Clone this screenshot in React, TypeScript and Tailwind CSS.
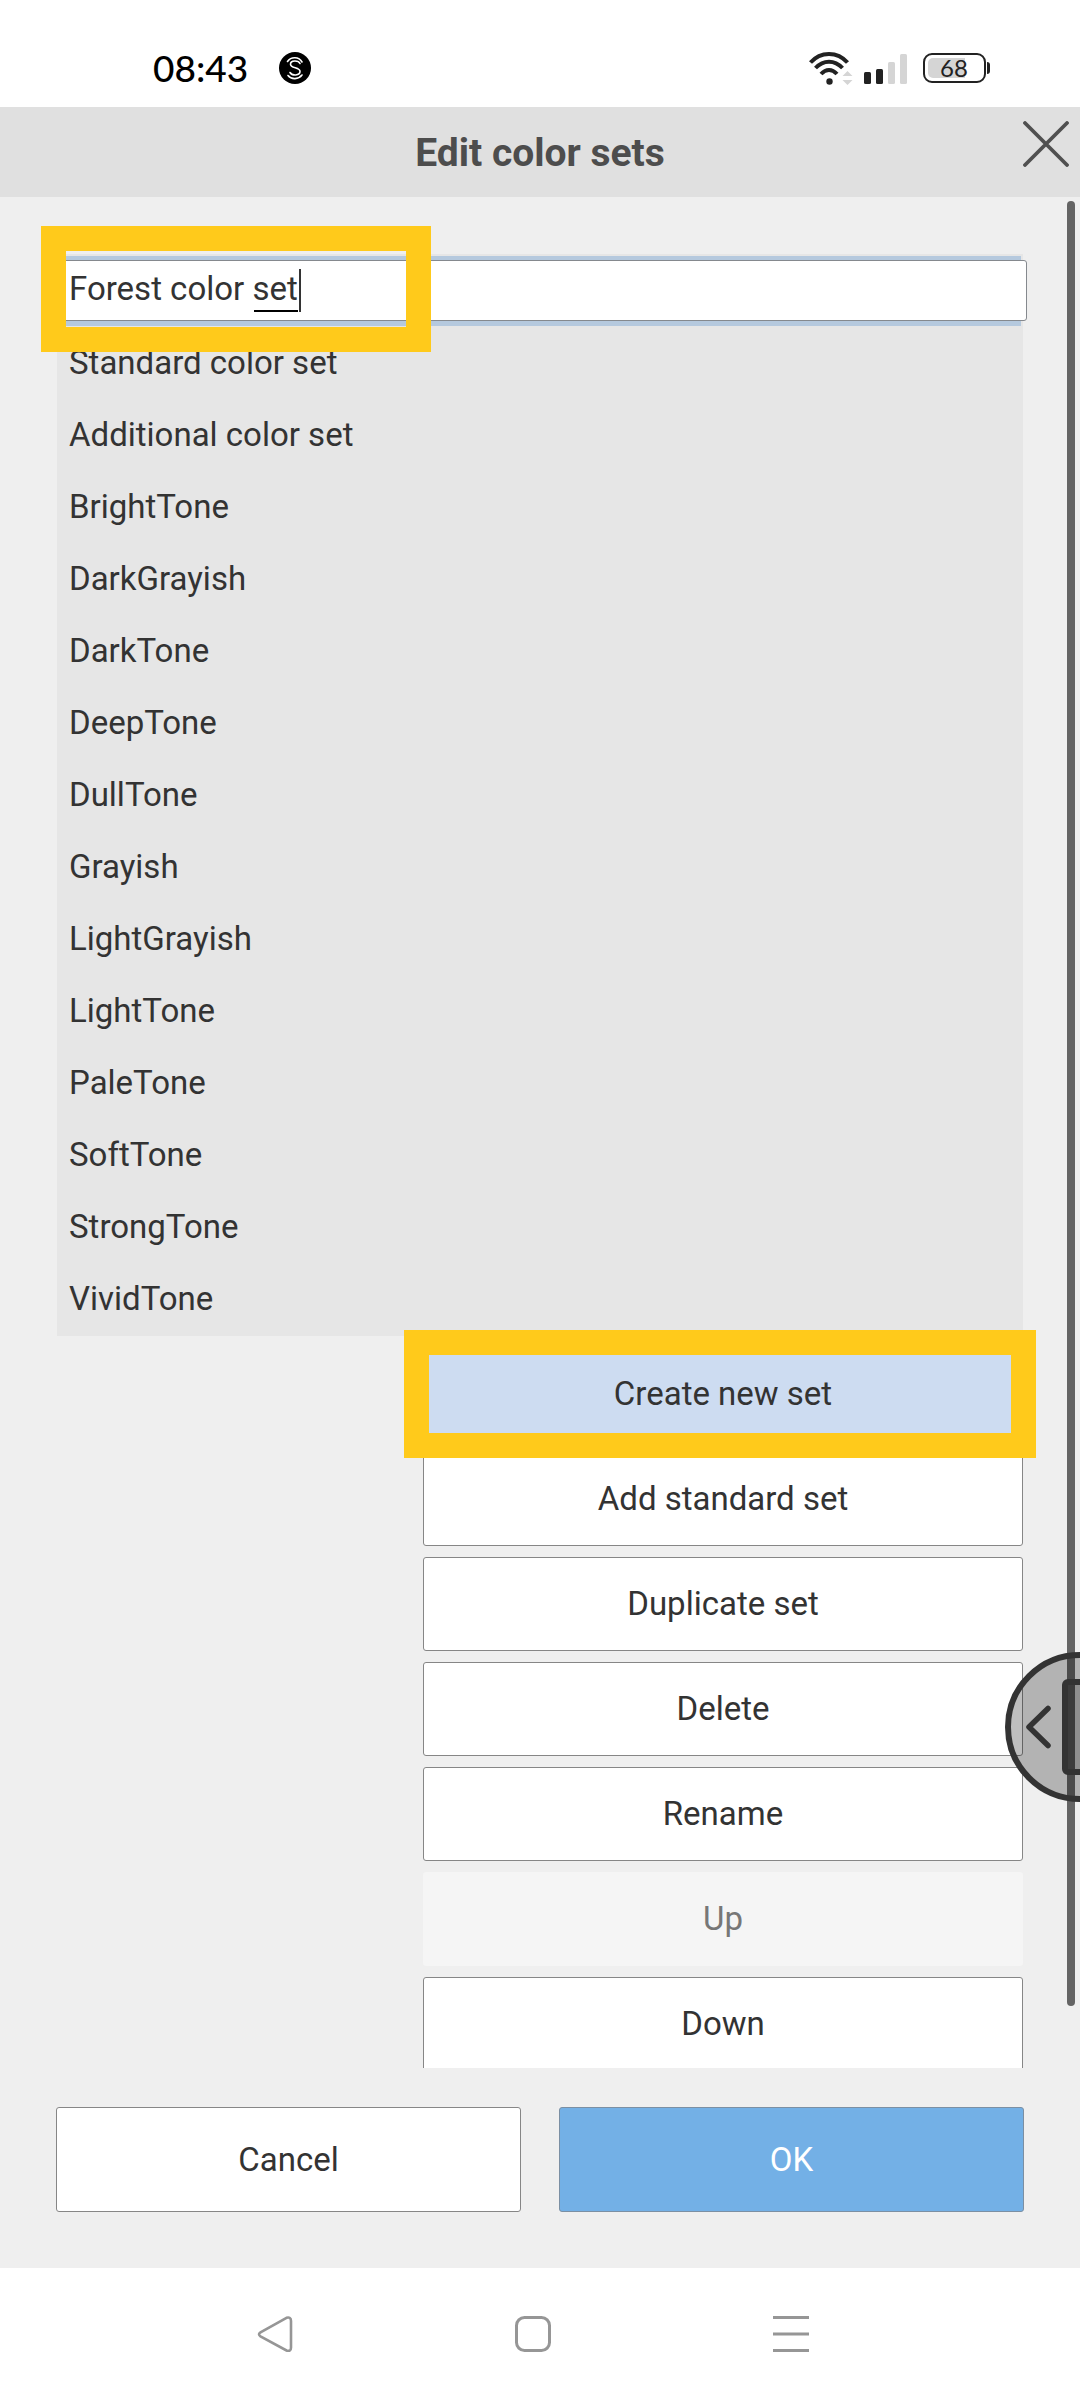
import { useState } from 'react'
import clsx from 'clsx'

const COLOR_SETS = [
   'Standard color set',
   'Additional color set',
   'BrightTone',
   'DarkGrayish',
   'DarkTone',
   'DeepTone',
   'DullTone',
   'Grayish',
   'LightGrayish',
   'LightTone',
   'PaleTone',
   'SoftTone',
   'StrongTone',
   'VividTone',
]

interface Action {
   label: string
   active?: boolean
   disabled?: boolean
}

const ACTIONS: Action[] = [
   { label: 'Create new set', active: true },
   { label: 'Add standard set' },
   { label: 'Duplicate set' },
   { label: 'Delete' },
   { label: 'Rename' },
   { label: 'Up', disabled: true },
   { label: 'Down' },
]

function StatusBar() {
   return (
      <div className="flex h-[107px] shrink-0 items-center justify-between bg-white pt-[29px] pr-[90px] pl-[153px] font-[Lato,sans-serif] text-black">
         <div className="flex items-center gap-[31px]">
            <span className="text-[37px] leading-[40px] font-medium">08:43</span>
            <svg width="32" height="32" viewBox="0 0 32 32" fill="none" aria-hidden="true">
               <circle cx="16" cy="16" r="16" fill="#000" />
               <g stroke="#fff" strokeWidth="1.6" strokeLinecap="round">
                  <path d="M8.5 9.5c3.5-5 11.5-5 14.5.5" />
                  <path d="M21 11.5c-1.500-3.500-9.500-3.500-9.500.7 0 4.500 9.500 2.800 9.500 7.300 0 4.300-8 4.500-10 1" />
                  <path d="M9 23.500c3.500 4.500 10.500 4 14-.5" />
               </g>
            </svg>
         </div>
         <div className="flex items-center">
            <svg width="98" height="34" viewBox="0 0 98 34" fill="none" aria-hidden="true">
               <g stroke="#222" strokeWidth="4">
                  <path d="M1.500 11.500c10-11.500 27-11.500 37 0" />
                  <path d="M6.500 17c8-8.500 19-8.500 27 0" />
                  <path d="M12 23c5-5.500 11-5.500 16 0" />
               </g>
               <circle cx="20.500" cy="30.500" r="3.200" fill="#222" />
               <path d="M38.500 20l5 5h-10zM38.500 34l5-5h-10z" fill="#d5d5d5" />
               <rect x="55" y="21" width="7" height="12" rx="1.500" fill="#222" />
               <rect x="67" y="18" width="7" height="15" rx="1.500" fill="#222" />
               <rect x="79" y="11" width="7" height="22" rx="1.500" fill="#d5d5d5" />
               <rect x="91" y="3" width="7" height="30" rx="1.500" fill="#d5d5d5" />
            </svg>
            <div className="ml-4 flex h-[30px] w-[63px] rounded-[9px] border-2 border-[#222] p-[3px]">
               <div className="relative w-[37px] rounded-l-[5px] bg-[#d5d5d5]">
                  <span className="absolute top-0 left-[12px] text-[24px] leading-[20px] text-[#222]">68</span>
               </div>
            </div>
            <div className="ml-px h-3 w-[3px] rounded-r-sm bg-[#222]" />
         </div>
      </div>
   )
}

function Header() {
   return (
      <header className="flex h-[90px] shrink-0 items-center bg-[#e0e0e0]">
         <div className="w-20" />
         <h1 className="flex-1 pt-[2px] text-center text-[39px] leading-[48px] font-bold text-[#4d4d4d]">Edit color sets</h1>
         <button type="button" aria-label="Close" className="flex h-full w-20 items-start justify-end pt-[14px] pr-[11px]">
            <svg width="46" height="46" viewBox="0 0 46 46" stroke="#505050" strokeWidth="3.800" strokeLinecap="round" aria-hidden="true">
               <path d="M2 2l42 42M44 2L2 44" />
            </svg>
         </button>
      </header>
   )
}

function NameField() {
   const [name, setName] = useState('Forest color set')

   return (
      <div className="relative mx-[2px] mb-[2px] h-[70px] bg-[#b5c9de] pt-[4px]">
         <input
            type="text"
            aria-label="Color set name"
            value={name}
            onChange={(e) => setName(e.target.value)}
            className="block h-[61px] w-[calc(100%+6px)] rounded-[3px] border border-[#85898e] bg-white pb-[4px] pl-[9px] outline-none"
         />
         {/* composing underline and text cursor */}
         <div className="absolute top-[54px] left-[195px] h-[2px] w-[44px] bg-black" />
         <div className="absolute top-[13px] left-[240px] h-[43px] w-[2px] bg-[#333]" />
         <div className="pointer-events-none absolute -top-[30px] -left-[18px] h-[126px] w-[390px] border-[25px] border-[#ffca1b]" />
      </div>
   )
}

function ActionButton({ label, active, disabled }: Action) {
   return (
      <div className="relative">
         <button
            type="button"
            disabled={disabled}
            className={clsx(
               'block h-[94px] w-full rounded-[3px] border',
               active && 'border-[#868686] bg-[#cddcf1]',
               disabled && 'border-transparent bg-[#f5f5f5] text-[#777]',
               !active && !disabled && 'border-[#868686] bg-white',
            )}
         >
            {label}
         </button>
         {active && (
            <div className="pointer-events-none absolute -top-[17px] -right-[13px] -bottom-[17px] -left-[19px] z-10 border-[25px] border-[#ffca1b]" />
         )}
      </div>
   )
}

function SideHandle() {
   return (
      <button type="button" aria-label="Open side panel" className="absolute top-[1652px] right-0 z-20">
         <svg width="75" height="150" viewBox="0 0 75 150" fill="none" stroke="#333" aria-hidden="true">
            <circle cx="75" cy="75" r="72" fill="#000" fillOpacity="0.25" strokeWidth="6" />
            <rect x="60" y="30" width="50" height="90" rx="3" fill="#000" fillOpacity="0.2" strokeWidth="6" />
            <path d="M43 56.500L24 75l19 18.500" strokeWidth="5.500" strokeLinecap="round" strokeLinejoin="round" />
         </svg>
      </button>
   )
}

function NavBar() {
   return (
      <nav className="grid h-[132px] shrink-0 grid-cols-[258px_258px_258px] justify-center bg-white pr-[14px]">
         <button type="button" aria-label="Back" className="flex items-center justify-center">
            <svg width="36" height="36" viewBox="0 0 36 36" fill="none" stroke="#969696" strokeWidth="2.600" aria-hidden="true">
               <path d="M29.500 1.800L3.500 16.300q-3 2 0 4L29.500 34.500q4.500 1.500 4.500-3V5q0-4.500-4.500-3.200z" />
            </svg>
         </button>
         <button type="button" aria-label="Home" className="flex items-center justify-center">
            <svg width="36" height="36" viewBox="0 0 36 36" fill="none" stroke="#969696" strokeWidth="3" aria-hidden="true">
               <rect x="1.500" y="1.500" width="33" height="33" rx="8" />
            </svg>
         </button>
         <button type="button" aria-label="Recent apps" className="flex items-center justify-center">
            <svg width="36" height="36" viewBox="0 0 36 36" stroke="#969696" strokeWidth="3" aria-hidden="true">
               <path d="M0 1.500h36M0 18h36M0 34.500h36" />
            </svg>
         </button>
      </nav>
   )
}

export default function App() {
   return (
      <div className="relative flex h-screen flex-col overflow-hidden bg-[#efefef] font-[Roboto,sans-serif] text-[33px] leading-[40px] text-[#333]">
         <StatusBar />
         <Header />
         <main className="flex min-h-0 flex-1">
            <div className="flex-1 overflow-hidden pt-[57px] pl-[57px]">
               <div className="mr-[44px] bg-[#e6e6e6] pt-[2px]">
                  <NameField />
                  <ul>
                     {COLOR_SETS.map((name) => (
                        <li key={name}>
                           <button type="button" className="block h-[72px] w-full pb-[2px] pl-[12px] text-left">
                              {name}
                           </button>
                        </li>
                     ))}
                  </ul>
               </div>
               <div className="mt-[11px] mr-[44px] ml-[366px] flex flex-col gap-[11px]">
                  {ACTIONS.map((action) => (
                     <ActionButton key={action.label} {...action} />
                  ))}
               </div>
            </div>
            <div className="mt-[4px] mr-[5px] mb-[62px] w-[8px] rounded-full bg-[#646464]" />
         </main>
         <footer className="flex gap-[38px] pt-[39px] pr-[56px] pb-[56px] pl-[56px]">
            <button type="button" className="h-[105px] flex-1 rounded-[3px] border border-[#868686] bg-white">
               Cancel
            </button>
            <button type="button" className="h-[105px] flex-1 rounded-[3px] border border-[#7b8fa3] bg-[#73b0e6] text-white">
               OK
            </button>
         </footer>
         <NavBar />
         <SideHandle />
      </div>
   )
}
